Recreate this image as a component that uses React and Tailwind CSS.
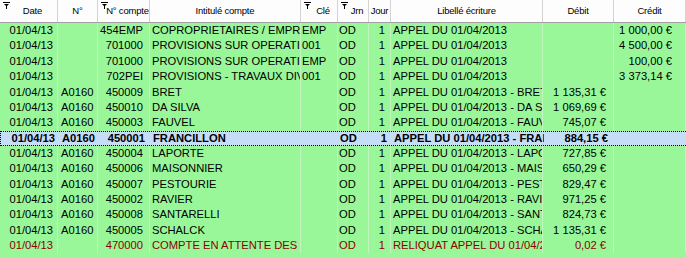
import React from "react";

const rows = [
  ["01/04/13", "", "454EMP", "COPROPRIETAIRES / EMPRUNTS", "EMP", "OD", "1", "APPEL DU 01/04/2013", "", "1 000,00 €", "n"],
  ["01/04/13", "", "701000", "PROVISIONS SUR OPERATIONS COURANTES", "001", "OD", "1", "APPEL DU 01/04/2013", "", "4 500,00 €", "n"],
  ["01/04/13", "", "701000", "PROVISIONS SUR OPERATIONS COURANTES", "EMP", "OD", "1", "APPEL DU 01/04/2013", "", "100,00 €", "n"],
  ["01/04/13", "", "702PEI", "PROVISIONS - TRAVAUX DIVERS", "001", "OD", "1", "APPEL DU 01/04/2013", "", "3 373,14 €", "n"],
  ["01/04/13", "A0160", "450009", "BRET", "", "OD", "1", "APPEL DU 01/04/2013 - BRET", "1 135,31 €", "", "n"],
  ["01/04/13", "A0160", "450010", "DA SILVA", "", "OD", "1", "APPEL DU 01/04/2013 - DA SILVA", "1 069,69 €", "", "n"],
  ["01/04/13", "A0160", "450003", "FAUVEL", "", "OD", "1", "APPEL DU 01/04/2013 - FAUVEL", "745,07 €", "", "n"],
  ["01/04/13", "A0160", "450001", "FRANCILLON", "", "OD", "1", "APPEL DU 01/04/2013 - FRANCILLON", "884,15 €", "", "s"],
  ["01/04/13", "A0160", "450004", "LAPORTE", "", "OD", "1", "APPEL DU 01/04/2013 - LAPORTE", "727,85 €", "", "n"],
  ["01/04/13", "A0160", "450006", "MAISONNIER", "", "OD", "1", "APPEL DU 01/04/2013 - MAISONNIER", "650,29 €", "", "n"],
  ["01/04/13", "A0160", "450007", "PESTOURIE", "", "OD", "1", "APPEL DU 01/04/2013 - PESTOURIE", "829,47 €", "", "n"],
  ["01/04/13", "A0160", "450002", "RAVIER", "", "OD", "1", "APPEL DU 01/04/2013 - RAVIER", "971,25 €", "", "n"],
  ["01/04/13", "A0160", "450008", "SANTARELLI", "", "OD", "1", "APPEL DU 01/04/2013 - SANTARELLI", "824,73 €", "", "n"],
  ["01/04/13", "A0160", "450005", "SCHALCK", "", "OD", "1", "APPEL DU 01/04/2013 - SCHALCK", "1 135,31 €", "", "n"],
  ["01/04/13", "", "470000", "COMPTE EN ATTENTE DES REGULARISATIONS", "", "OD", "1", "RELIQUAT APPEL DU 01/04/2013", "0,02 €", "", "r"],
];

const cellAlign = [
  "justify-end pr-[4px]",
  "justify-start pl-[3px]",
  "justify-end pr-[6px]",
  "justify-start pl-[2px]",
  "justify-start pl-[1px]",
  "justify-start pl-[1px]",
  "justify-end pr-[5px]",
  "justify-start pl-[2px]",
  "justify-end pr-[7px]",
  "justify-end pr-[13px]",
];

const headers = [
  ["Date", true],
  ["N°", false],
  ["N° compte", true],
  ["Intitulé compte", false],
  ["Clé", true],
  ["Jrn", true],
  ["Jour", false],
  ["Libellé écriture", false],
  ["Débit", false],
  ["Crédit", false],
];

const grid = "grid grid-cols-[58px_40px_52px_151px_37px_31px_22px_152px_71px_72px]";

function SortIcon() {
  return (
    <svg className="absolute left-[3px] top-[2px]" width="7" height="7" viewBox="0 0 7 7">
      <rect x="0" y="0" width="7" height="1" fill="#000" />
      <path d="M1 2 L6 2 L3.5 4.5 Z" fill="#000" />
      <rect x="3" y="3" width="1" height="4" fill="#000" />
    </svg>
  );
}

export default function App() {
  return (
    <div className="w-[686px] h-[258px] overflow-hidden bg-[#99f799] font-['Liberation_Sans',Arial,sans-serif]">
      <div className={`${grid} h-[23px] bg-[#fdfdfd] border-b border-[#a0a0a0]`}>
        {headers.map(([h, icon], i) => (
          <div
            key={i}
            className={`relative flex items-center justify-center border-r border-[#d4d4d4] text-[9.5px] text-black ${icon ? "pl-[8px]" : ""}`}
          >
            {icon && <SortIcon />}
            <span className="whitespace-nowrap tracking-[-0.2px]">{h}</span>
          </div>
        ))}
      </div>
      {rows.map((r, ri) => {
        const sel = r[10] === "s";
        const red = r[10] === "r";
        return (
          <div
            key={ri}
            className={`${grid} h-[15.36px] text-[11.2px] leading-none ${
              sel
                ? "bg-[#c5ddf6] font-bold text-black border-y border-l border-dotted border-black"
                : red
                ? "text-[#8c0000]"
                : "text-black"
            }`}
          >
            {r.slice(0, 10).map((c, ci) => (
              <div
                key={ci}
                className={`flex items-center overflow-hidden whitespace-nowrap ${cellAlign[ci]} ${
                  sel ? "" : "border-r border-[#c2f5bd]"
                }`}
              >
                <span>{c}</span>
              </div>
            ))}
          </div>
        );
      })}
    </div>
  );
}
